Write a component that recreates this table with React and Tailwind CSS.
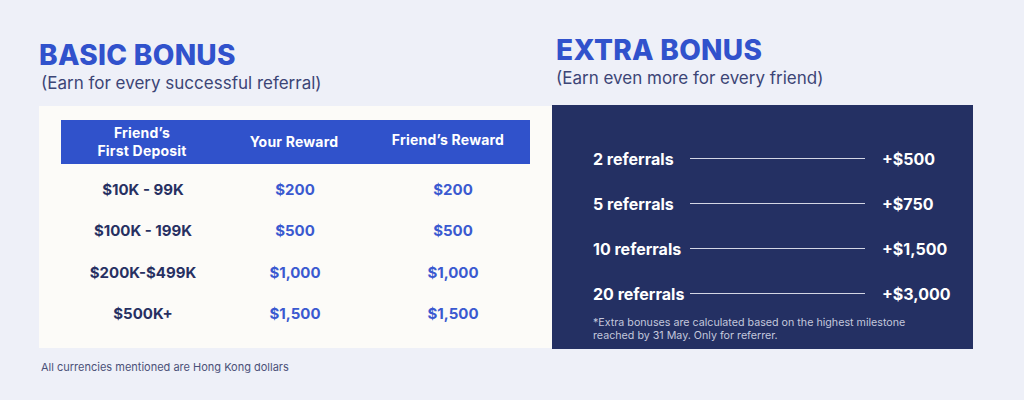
const rows = [
  { deposit: "$10K - 99K", you: "$200", friend: "$200" },
  { deposit: "$100K - 199K", you: "$500", friend: "$500" },
  { deposit: "$200K-$499K", you: "$1,000", friend: "$1,000" },
  { deposit: "$500K+", you: "$1,500", friend: "$1,500" },
];

const extras = [
  { label: "2 referrals", amount: "+$500" },
  { label: "5 referrals", amount: "+$750" },
  { label: "10 referrals", amount: "+$1,500" },
  { label: "20 referrals", amount: "+$3,000" },
];

export default function App() {
  return (
    <div className="w-[1024px] h-[400px] bg-[#eef0f8] font-['Inter','Liberation_Sans',sans-serif] overflow-hidden">
      <div className="flex pl-[39px] pt-[38px]">
        {/* basic bonus */}
        <div className="w-[513px] flex flex-col">
          <div className="h-[68px] pt-[1px]">
            <h1 className="text-[28px] leading-[32px] font-extrabold text-[#3152cc] tracking-[0.3px]">BASIC BONUS</h1>
            <p className="text-[17px] leading-[22px] text-[#3c4576] mt-[1px] ml-[2px]">(Earn for every successful referral)</p>
          </div>
          <div className="h-[242px] bg-[#fcfbf8] px-[22px] pt-[14px]">
            <div className="grid grid-cols-[160px_150px_158px] h-[44px] bg-[#3052cb] items-center text-white text-[14px] font-bold leading-[18px] text-center tracking-[0.2px]">
              <div className="pl-[2px]">
                Friend’s
                <br />
                First Deposit
              </div>
              <div className="-mt-[1px] pr-[4px]">Your Reward</div>
              <div className="-mt-[4px] pr-[4px]">Friend’s Reward</div>
            </div>
            <div className="flex flex-col pt-[5px]">
              {rows.map((r) => (
                <div key={r.deposit} className="grid grid-cols-[164px_140px_164px] h-[41.5px] items-center text-center text-[15px] font-bold">
                  <div className="text-[#273062]">{r.deposit}</div>
                  <div className="text-[#3a59d0]">{r.you}</div>
                  <div className="text-[#3a59d0] pl-[12px]">{r.friend}</div>
                </div>
              ))}
            </div>
          </div>
          <p className="text-[11px] text-[#4b5178] mt-[11px] ml-[2px]">All currencies mentioned are Hong Kong dollars</p>
        </div>

        {/* extra bonus */}
        <div className="w-[421px] flex flex-col">
          <div className="h-[71px] pl-[4px] -mt-[4px]">
            <h1 className="text-[28px] leading-[32px] font-extrabold text-[#3152cc] tracking-[0.3px]">EXTRA BONUS</h1>
            <p className="text-[17px] leading-[22px] text-[#3c4576] mt-[1px]">(Earn even more for every friend)</p>
          </div>
          <div className="h-[244px] bg-[#243063] pl-[41px] pr-[26px] pt-[43px]">
            <div className="flex flex-col gap-[24px]">
              {extras.map((e) => (
                <div key={e.label} className="flex items-center h-[21px] text-white text-[16px] font-bold">
                  <span className="w-[97px] shrink-0">{e.label}</span>
                  <span className="w-[175px] h-[1.5px] bg-[#d3d6e4] shrink-0" />
                  <span className="ml-[17px]">{e.amount}</span>
                </div>
              ))}
            </div>
            <p className="text-[10.7px] leading-[13px] text-[#c3c7dc] mt-[12px] w-[340px]">
              *Extra bonuses are calculated based on the highest milestone reached by 31 May. Only for referrer.
            </p>
          </div>
        </div>
      </div>
    </div>
  );
}
